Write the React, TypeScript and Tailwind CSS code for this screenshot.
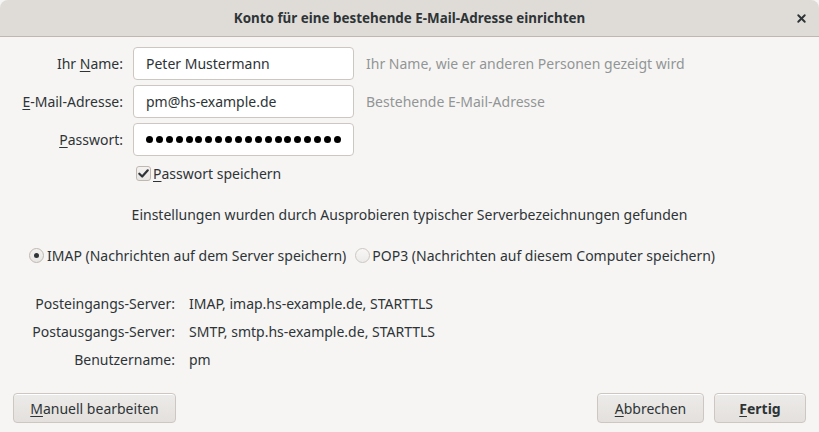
import { X } from "lucide-react";

const font = { fontFamily: '"Noto Sans", "Open Sans", sans-serif' };

function Field({ mnemonic, rest, prefix, children, hint }: { mnemonic: string; rest: string; prefix?: string; children: React.ReactNode; hint: string }) {
  return (
    <>
      <div className="text-right pr-[10px] text-[#2e3436] leading-[33px]">
        {prefix}
        <u className="underline-offset-2">{mnemonic}</u>
        {rest}
      </div>
      <div className="h-[33px] bg-white border border-[#cdc7c2] rounded-[4px] flex items-center px-[12px] text-[#2e3436]">
        {children}
      </div>
      <div className="pl-[12px] leading-[33px] text-[#929595] whitespace-nowrap">{hint}</div>
    </>
  );
}

function Button({ children, bold, className }: { children: React.ReactNode; bold?: boolean; className?: string }) {
  return (
    <div
      className={`h-[30px] flex items-center justify-center rounded-[4px] border border-[#cdc7c2] bg-gradient-to-b from-[#edebe9] to-[#e3e0dd] text-[#2e3436] shadow-[inset_0_1px_white] ${bold ? "font-bold" : ""} ${className ?? ""}`}
    >
      {children}
    </div>
  );
}

export default function App() {
  return (
    <div className="w-[819px] h-[432px] bg-[#f6f5f4] flex flex-col text-[14px] text-[#2e3436] overflow-hidden" style={font}>
      {/* Title bar */}
      <div className="h-[37px] shrink-0 bg-[#dfdcd8] border-b border-[#bfb8b1] rounded-t-[8px] flex items-center relative">
        <div className="flex-1 text-center font-bold text-[13.4px] text-[#2e3436]">Konto für eine bestehende E-Mail-Adresse einrichten</div>
        <X className="absolute right-[11px] top-[12px] w-[13px] h-[13px] text-[#2e3436]" strokeWidth={3.5} />
      </div>

      {/* Form */}
      <div className="grid grid-cols-[133px_221px_auto] gap-y-[5px] mt-[10px]">
        <Field mnemonic="N" prefix="Ihr " rest="ame:" hint="Ihr Name, wie er anderen Personen gezeigt wird">
          Peter Mustermann
        </Field>
        <Field mnemonic="E" rest="-Mail-Adresse:" hint="Bestehende E-Mail-Adresse">
          pm@hs-example.de
        </Field>
        <Field mnemonic="P" rest="asswort:" hint="">
          <div className="flex gap-[2.9px]">
            {Array.from({ length: 20 }).map((_, i) => (
              <span key={i} className="w-[7px] h-[7px] rounded-full bg-black" />
            ))}
          </div>
        </Field>
      </div>

      {/* Checkbox */}
      <div className="flex items-center ml-[136px] mt-[9px] h-[16px]">
        <span className="w-[15px] h-[15px] rounded-[3px] border border-[#bfb8b1] bg-gradient-to-b from-[#f4f2f1] to-[#e8e6e3] flex items-center justify-center">
          <svg viewBox="0 0 14 14" className="w-[13px] h-[13px]">
            <path d="M2.5 7.2 L5.6 10.2 L11.6 3.6" fill="none" stroke="#2e3436" strokeWidth="2.4" strokeLinecap="round" strokeLinejoin="round" />
          </svg>
        </span>
        <span className="ml-[2px]">
          <u className="underline-offset-2">P</u>asswort speichern
        </span>
      </div>

      {/* Info */}
      <div className="text-center mt-[24px] h-[20px] leading-[20px]">
        Einstellungen wurden durch Ausprobieren typischer Serverbezeichnungen gefunden
      </div>

      {/* Radios */}
      <div className="flex items-center ml-[29px] mt-[20px] h-[20px]">
        <span className="w-[15px] h-[15px] rounded-full border border-[#bfb8b1] bg-gradient-to-b from-[#f4f2f1] to-[#e8e6e3] flex items-center justify-center">
          <span className="w-[5px] h-[5px] rounded-full bg-[#2e3436]" />
        </span>
        <span className="ml-[3px]">IMAP (Nachrichten auf dem Server speichern)</span>
        <span className="ml-[9px] w-[15px] h-[15px] rounded-full border border-[#cdc7c2] bg-gradient-to-b from-[#f8f7f6] to-[#edebe9]" />
        <span className="ml-[2px]">POP3 (Nachrichten auf diesem Computer speichern)</span>
      </div>

      {/* Server info */}
      <div className="grid grid-cols-[189px_auto] mt-[25px] leading-[28px]">
        <div className="text-right pr-[14px]">Posteingangs-Server:</div>
        <div>IMAP, imap.hs-example.de, STARTTLS</div>
        <div className="text-right pr-[14px]">Postausgangs-Server:</div>
        <div>SMTP, smtp.hs-example.de, STARTTLS</div>
        <div className="text-right pr-[14px]">Benutzername:</div>
        <div>pm</div>
      </div>

      {/* Buttons */}
      <div className="flex items-center mt-[19px] px-[13px]">
        <Button className="w-[163px]">
          <span><u className="underline-offset-2">M</u>anuell bearbeiten</span>
        </Button>
        <div className="flex-1" />
        <Button className="w-[107px]">
          <span><u className="underline-offset-2">A</u>bbrechen</span>
        </Button>
        <Button bold className="w-[92px] ml-[10px]">
          <span><u className="underline-offset-2">F</u>ertig</span>
        </Button>
      </div>
    </div>
  );
}
